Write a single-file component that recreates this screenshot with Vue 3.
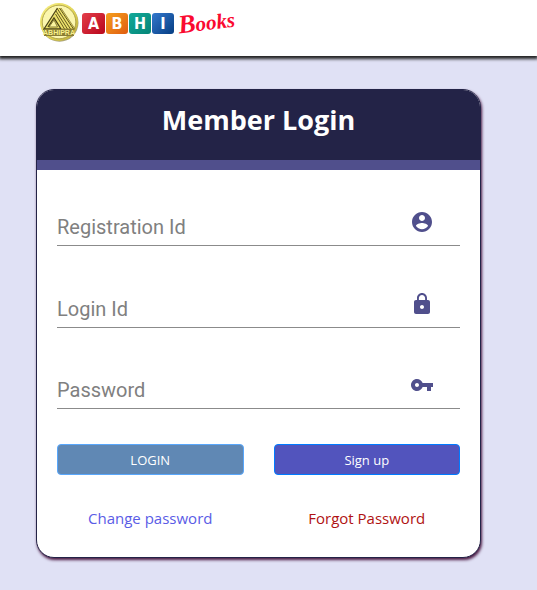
<script setup>
import { reactive } from 'vue'

const form = reactive({ registration: '', login: '', password: '' })

const fields = [
  {
    key: 'registration',
    label: 'Registration Id',
    type: 'text',
    icon: 'M12 2C6.48 2 2 6.48 2 12s4.48 10 10 10 10-4.48 10-10S17.52 2 12 2zm0 3c1.66 0 3 1.34 3 3s-1.34 3-3 3-3-1.34-3-3 1.34-3 3-3zm0 14.2c-2.5 0-4.71-1.28-6-3.22.03-1.99 4-3.08 6-3.08 1.99 0 5.97 1.09 6 3.08-1.29 1.94-3.5 3.22-6 3.22z',
  },
  {
    key: 'login',
    label: 'Login Id',
    type: 'text',
    icon: 'M18 8h-1V6c0-2.76-2.24-5-5-5S7 3.24 7 6v2H6c-1.1 0-2 .9-2 2v10c0 1.1.9 2 2 2h12c1.1 0 2-.9 2-2V10c0-1.1-.9-2-2-2zm-6 9c-1.1 0-2-.9-2-2s.9-2 2-2 2 .9 2 2-.9 2-2 2zm3.1-9H8.9V6c0-1.71 1.39-3.1 3.1-3.1 1.71 0 3.1 1.39 3.1 3.1v2z',
  },
  {
    key: 'password',
    label: 'Password',
    type: 'password',
    icon: 'M12.65 10C11.83 7.67 9.61 6 7 6c-3.31 0-6 2.69-6 6s2.69 6 6 6c2.61 0 4.83-1.67 5.65-4H17v4h4v-4h2v-4H12.65zM7 14c-1.1 0-2-.9-2-2s.9-2 2-2 2 .9 2 2-.9 2-2 2z',
  },
]
</script>

<template>
  <div class="page">
    <header class="topbar">
      <a href="#" class="brand" aria-label="Abhi Books">
        <svg class="emblem" viewBox="0 0 40 40" width="40" height="40" aria-hidden="true">
          <defs>
            <linearGradient id="gold" x1="0" y1="0" x2="1" y2="1">
              <stop offset="0" stop-color="#f6ee86" />
              <stop offset="0.5" stop-color="#e6da58" />
              <stop offset="1" stop-color="#b5a536" />
            </linearGradient>
          </defs>
          <circle cx="20.5" cy="20.8" r="19" fill="#a9a37c" />
          <circle cx="20" cy="20" r="19" fill="url(#gold)" />
          <circle cx="20" cy="20" r="16.8" fill="#fbf6ae" stroke="#a3963c" stroke-width="0.8" />
          <path d="M18.500 6 5 27H36L22 6Z" fill="#ebe06a" />
          <path d="M18.500 6 5 27H22L15 16 9 25" fill="none" stroke="#4b4318" stroke-width="1.300" />
          <path d="M10 25 15 18 18.500 25Z" fill="#faf4a0" stroke="#6b5f22" stroke-width="0.800" />
          <path d="M16.500 12 25.500 27M17 9 28.500 27M18.500 7 31.500 27M20.500 6 34.500 27" stroke="#655a20" stroke-width="1" fill="none" />
          <path d="M22 6 36 27H22" fill="none" stroke="#867a30" stroke-width="0.800" />
          <rect x="5" y="27" width="30" height="7" fill="#8a7d34" />
          <text x="20" y="33" text-anchor="middle" class="emblem-text">ABHIPRA</text>
        </svg>
        <span class="tiles">
          <span class="tile red">A</span>
          <span class="tile orange">B</span>
          <span class="tile teal">H</span>
          <span class="tile blue">I</span>
        </span>
        <span class="script">Books</span>
      </a>
    </header>

    <main class="content">
      <section class="card">
        <h1 class="title">Member Login</h1>
        <form class="form" @submit.prevent>
          <div class="fields">
            <div v-for="f in fields" :key="f.key" class="field">
              <input
                :id="f.key"
                v-model="form[f.key]"
                :type="f.type"
                :placeholder="f.label"
                :aria-label="f.label"
              />
              <label :for="f.key" class="icon">
                <svg viewBox="0 0 24 24" width="24" height="24" aria-hidden="true">
                  <path :d="f.icon" fill="currentColor" />
                </svg>
              </label>
            </div>
          </div>
          <div class="actions">
            <button type="submit" class="btn login">LOGIN</button>
            <button type="button" class="btn signup">Sign up</button>
            <a href="#" class="link change">Change password</a>
            <a href="#" class="link forgot">Forgot Password</a>
          </div>
        </form>
      </section>
    </main>
  </div>
</template>

<style>
body {
  background: #e0e1f5;
}
</style>

<style scoped>
.page {
  min-height: 100vh;
  box-sizing: border-box;
  font-family: 'Open Sans', 'Noto Sans', sans-serif;
}
.topbar {
  box-sizing: border-box;
  height: 56px;
  padding: 2px 39px;
  background: #fff;
  box-shadow: 0 2px 3px 1px #222;
}
.brand {
  display: inline-flex;
  align-items: center;
  text-decoration: none;
}
.emblem-text {
  font: bold 7px 'Liberation Sans', sans-serif;
  fill: #f8f08c;
}
.tiles {
  display: flex;
  gap: 1px;
  margin-left: 3px;
  padding-top: 2px;
}
.tile {
  width: 22px;
  height: 21px;
  border-radius: 3px;
  color: #fff;
  font: bold 16px/21px 'DejaVu Sans Condensed', 'Liberation Sans', sans-serif;
  text-align: center;
}
.tile.red {
  width: 23px;
  background: linear-gradient(135deg, #e43e4b, #b8061b);
}
.tile.orange {
  background: linear-gradient(135deg, #f5a01e, #e05c10);
}
.tile.teal {
  background: linear-gradient(135deg, #12a999, #058577);
}
.tile.blue {
  background: linear-gradient(135deg, #3479ce, #053d82);
}
.script {
  margin-left: 4px;
  color: #fa0a30;
  font: italic bold 21px/24px 'Liberation Serif', serif;
  transform: rotate(-7deg);
}
.script::first-letter {
  font-size: 26px;
}
.content {
  padding: 33px 56px 32px 36px;
}
.card {
  overflow: hidden;
  border: 1px solid #232347;
  border-radius: 18px;
  background: #fff;
  box-shadow: 1px 2px 3px #4a1942;
}
.title {
  box-sizing: border-box;
  height: 80px;
  margin: 0;
  padding-top: 10px;
  border-bottom: 10px solid #504f8c;
  background: #232347;
  color: #fff;
  font-size: 27px;
  font-weight: 700;
  line-height: 40px;
  text-align: center;
}
.form {
  padding: 37px 20px 27px;
}
.fields {
  display: flex;
  flex-direction: column;
  justify-content: space-between;
  min-height: 202px;
}
.field {
  display: flex;
  align-items: flex-start;
  box-sizing: border-box;
  height: 39px;
  padding: 3px 26px 0 0;
  border-bottom: 1px solid #8b8b8b;
}
.field input {
  flex: 1;
  min-width: 0;
  height: 34px;
  padding: 0;
  border: 0;
  outline: 0;
  background: transparent;
  color: #333;
  font: 20px Roboto, sans-serif;
}
.field input::placeholder {
  color: #808080;
  opacity: 1;
}
.icon {
  display: flex;
  color: #504f8c;
}
.actions {
  display: grid;
  grid-template-columns: 1fr 1fr;
  gap: 31px 30px;
  margin-top: 35px;
}
.btn {
  height: 31px;
  padding: 0;
  border: 1px solid #007bff;
  border-radius: 4px;
  color: #fff;
  font: 13px 'Open Sans', 'Noto Sans', sans-serif;
  cursor: pointer;
}
.login {
  border-color: #59a7fb;
  background: #6088b4;
}
.signup {
  background: #5254bd;
}
.link {
  font-size: 15px;
  line-height: 24px;
  text-align: center;
  text-decoration: none;
}
.change {
  color: #5a5ce6;
}
.forgot {
  color: #b01212;
}
</style>
